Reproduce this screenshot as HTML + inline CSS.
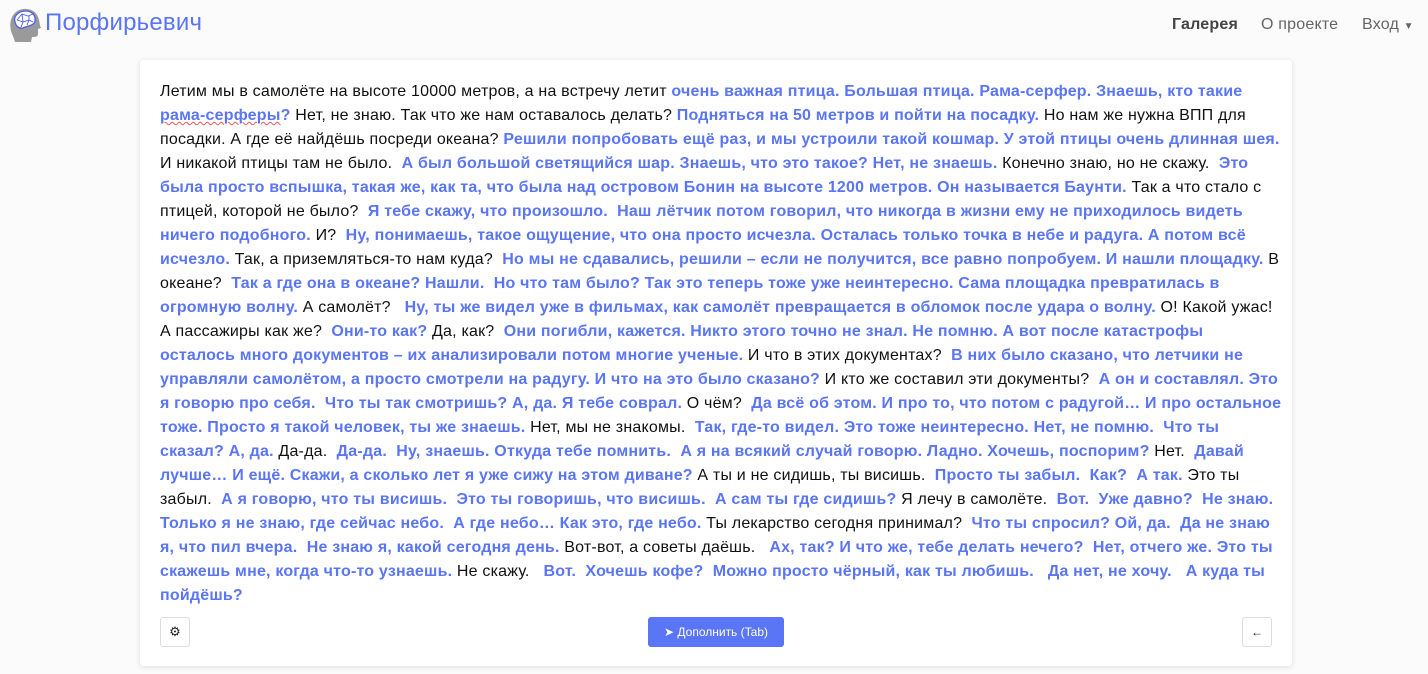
<!DOCTYPE html>
<html><head><meta charset="utf-8"><style>
*{margin:0;padding:0;box-sizing:border-box}
body{width:1428px;height:674px;background:#fbfbfb;font-family:"Liberation Sans","DejaVu Sans",sans-serif;overflow:hidden;position:relative}
.nav{position:absolute;top:0;left:0;width:1428px;height:50px}
.brand{position:absolute;left:45px;top:9px;font-size:24px;color:#5a75f5;letter-spacing:0.2px}
.logo{position:absolute;left:7px;top:6px}
.links{position:absolute;top:16px;font-size:16px;color:#666;letter-spacing:0.2px}
.card{position:absolute;left:140px;top:60px;width:1152px;height:606px;background:#fff;border-radius:4px;box-shadow:0 1px 6px rgba(0,0,0,.12)}
.txt{position:absolute;left:20px;top:20px;font-size:16px;line-height:24px;color:#111;white-space:nowrap;letter-spacing:0.2px}
.txt b{color:#5a75f5;font-weight:bold;letter-spacing:0.2px}
.btn{position:absolute;top:557px;height:30px;border:1px solid #ddd;border-radius:3px;background:#fff}
</style></head><body>
<div class="nav">
<svg class="logo" width="36" height="36" viewBox="0 0 36 36"><path d="M6 30 C2 22 2 12 9 6 C15 1 26 2 30 9 C33 14 32 18 34 22 L31 23 L31 28 C31 31 28 31 25 31 L24 36 L8 36 Z" fill="#9a9a9a"/><path d="M8 16 C6 10 12 5 18 5 C25 5 29 9 28 15 C27 20 20 20 16 22 C11 23 9 20 8 16Z" fill="#fff" stroke="#4a5ef0" stroke-width="1.3"/><path d="M10 14 L15 8 L21 10 L26 8 M15 8 L16 16 L22 14 L26 16 M10 14 L16 16 L14 21 M22 10 L22 14 L20 19" stroke="#4a5ef0" stroke-width="0.9" fill="none"/></svg>
<div class="brand">Порфирьевич</div>
<div class="links" style="left:1172px;font-weight:bold;color:#444">Галерея</div>
<div class="links" style="left:1261px">О проекте</div>
<div class="links" style="left:1362px">Вход <span style="font-size:10px">▼</span></div>
</div>
<div class="card">
<div class="txt">Летим мы в самолёте на высоте 10000 метров, а на встречу летит <b>очень важная птица. Большая птица. Рама-серфер. Знаешь, кто такие</b><br>
<b style="text-decoration:underline wavy #e55;text-decoration-thickness:1px">рама-серферы</b><b>?</b> Нет, не знаю. Так что же нам оставалось делать? <b>Подняться на 50 метров и пойти на посадку.</b> Но нам же нужна ВПП для<br>
посадки. А где её найдёшь посреди океана? <b>Решили попробовать ещё раз, и мы устроили такой кошмар. У этой птицы очень длинная шея.</b><br>
И никакой птицы там не было. &nbsp;<b>А был большой светящийся шар. Знаешь, что это такое? Нет, не знаешь.</b> Конечно знаю, но не скажу. &nbsp;<b>Это</b><br>
<b>была просто вспышка, такая же, как та, что была над островом Бонин на высоте 1200 метров. Он называется Баунти.</b> Так а что стало с<br>
птицей, которой не было? &nbsp;<b>Я тебе скажу, что произошло. &nbsp;Наш лётчик потом говорил, что никогда в жизни ему не приходилось видеть</b><br>
<b>ничего подобного.</b> И? &nbsp;<b>Ну, понимаешь, такое ощущение, что она просто исчезла. Осталась только точка в небе и радуга. А потом всё</b><br>
<b>исчезло.</b> Так, а приземляться-то нам куда? &nbsp;<b>Но мы не сдавались, решили – если не получится, все равно попробуем. И нашли площадку.</b> В<br>
океане? &nbsp;<b>Так а где она в океане? Нашли. &nbsp;Но что там было? Так это теперь тоже уже неинтересно. Сама площадка превратилась в</b><br>
<b>огромную волну.</b> А самолёт? &nbsp;<b> Ну, ты же видел уже в фильмах, как самолёт превращается в обломок после удара о волну.</b> О! Какой ужас!<br>
А пассажиры как же? &nbsp;<b>Они-то как?</b> Да, как? &nbsp;<b>Они погибли, кажется. Никто этого точно не знал. Не помню. А вот после катастрофы</b><br>
<b>осталось много документов – их анализировали потом многие ученые.</b> И что в этих документах? &nbsp;<b>В них было сказано, что летчики не</b><br>
<b>управляли самолётом, а просто смотрели на радугу. И что на это было сказано?</b> И кто же составил эти документы? &nbsp;<b>А он и составлял. Это</b><br>
<b>я говорю про себя. &nbsp;Что ты так смотришь? А, да. Я тебе соврал.</b> О чём? &nbsp;<b>Да всё об этом. И про то, что потом с радугой… И про остальное</b><br>
<b>тоже. Просто я такой человек, ты же знаешь.</b> Нет, мы не знакомы. &nbsp;<b>Так, где-то видел. Это тоже неинтересно. Нет, не помню. &nbsp;Что ты</b><br>
<b>сказал? А, да.</b> Да-да. &nbsp;<b>Да-да. &nbsp;Ну, знаешь. Откуда тебе помнить. &nbsp;А я на всякий случай говорю. Ладно. Хочешь, поспорим?</b> Нет. &nbsp;<b>Давай</b><br>
<b>лучше… И ещё. Скажи, а сколько лет я уже сижу на этом диване?</b> А ты и не сидишь, ты висишь. &nbsp;<b>Просто ты забыл. &nbsp;Как? &nbsp;А так.</b> Это ты<br>
забыл. &nbsp;<b>А я говорю, что ты висишь. &nbsp;Это ты говоришь, что висишь. &nbsp;А сам ты где сидишь?</b> Я лечу в самолёте. &nbsp;<b>Вот. &nbsp;Уже давно? &nbsp;Не знаю.</b><br>
<b>Только я не знаю, где сейчас небо. &nbsp;А где небо… Как это, где небо.</b> Ты лекарство сегодня принимал? &nbsp;<b>Что ты спросил? Ой, да. &nbsp;Да не знаю</b><br>
<b>я, что пил вчера. &nbsp;Не знаю я, какой сегодня день.</b> Вот-вот, а советы даёшь. &nbsp; <b>Ах, так? И что же, тебе делать нечего? &nbsp;Нет, отчего же. Это ты</b><br>
<b>скажешь мне, когда что-то узнаешь.</b> Не скажу. &nbsp; <b>Вот. &nbsp;Хочешь кофе? &nbsp;Можно просто чёрный, как ты любишь. &nbsp; Да нет, не хочу. &nbsp; А куда ты</b><br>
<b>пойдёшь?</b></div>
<div class="btn" style="left:20px;width:30px;text-align:center;font-size:13px;line-height:28px;color:#222">⚙</div>
<div class="btn" style="left:508px;width:136px;background:#5a75f5;border-color:#5a75f5;color:#fff;font-size:12px;line-height:28px;text-align:center">➤ Дополнить (Tab)</div>
<div class="btn" style="left:1102px;width:30px;text-align:center;font-size:12px;line-height:28px;color:#222">←</div>
</div>
</body></html>
